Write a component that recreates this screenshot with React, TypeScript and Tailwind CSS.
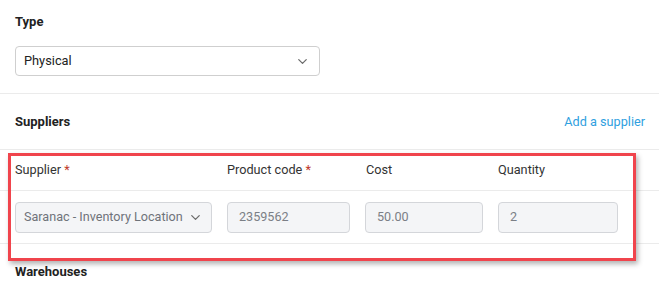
import { ChevronDown } from 'lucide-react'

function Chevron({ className = '' }: { className?: string }) {
  return <ChevronDown size={15} strokeWidth={2} className={`text-[#6b6b6b] ${className}`} />
}

function Field({ value, width }: { value: string; width: string }) {
  return (
    <div className={`${width} h-[31px] rounded-[4px] border border-[#d4d6da] bg-[#f4f5f7] px-[11px] flex items-center text-[12.6px] text-[#7b7f86]`}>
      {value}
    </div>
  )
}

export default function App() {
  return (
    <div className="relative w-[659px] h-[283px] overflow-hidden bg-white text-[#222] font-['Roboto','Liberation_Sans',sans-serif]">
      {/* Type */}
      <div className="px-[15px] pt-[13px] h-[94px] border-b border-[#ebebeb]">
        <p className="text-[13px] font-bold leading-[18px]">Type</p>
        <div className="mt-[15px] w-[305px] h-[30px] rounded-[4px] border border-[#cfcfcf] px-[8px] flex items-center justify-between text-[12.8px] text-[#222]">
          <span>Physical</span>
          <Chevron className="mr-[1px]" />
        </div>
      </div>

      {/* Suppliers */}
      <div className="h-[56px] px-[15px] flex items-center justify-between border-b border-[#ebebeb]">
        <p className="text-[13px] font-bold">Suppliers</p>
        <a className="text-[12.7px] text-[#2fa0e0] mr-[-1px]">Add a supplier</a>
      </div>

      {/* Header row */}
      <div className="h-[41px] px-[15px] flex items-center text-[12.7px] text-[#333] border-b border-[#ebebeb]">
        <span className="w-[212px]">Supplier <span className="text-[#c0392b]">*</span></span>
        <span className="w-[139px]">Product code <span className="text-[#c0392b]">*</span></span>
        <span className="w-[132px]">Cost</span>
        <span>Quantity</span>
      </div>

      {/* Input row */}
      <div className="h-[53px] px-[15px] flex items-center gap-[15px] border-b border-[#ebebeb]">
        <div className="w-[197px] h-[31px] rounded-[4px] border border-[#d4d6da] bg-[#f4f5f7] pl-[8px] pr-[8px] flex items-center justify-between text-[12.6px] text-[#6f737a]">
          <span>Saranac - Inventory Location</span>
          <Chevron />
        </div>
        <Field value="2359562" width="w-[123px]" />
        <Field value="50.00" width="w-[118px]" />
        <Field value="2" width="w-[120px]" />
      </div>

      {/* Warehouses */}
      <div className="px-[15px] pt-[18px]">
        <p className="text-[13px] font-bold">Warehouses</p>
      </div>

      {/* highlight annotation */}
      <div className="absolute left-[8px] top-[153px] w-[628px] h-[108px] border-[3px] border-[#f0444c] shadow-[2px_3px_5px_rgba(0,0,0,0.3)] pointer-events-none" />
    </div>
  )
}
